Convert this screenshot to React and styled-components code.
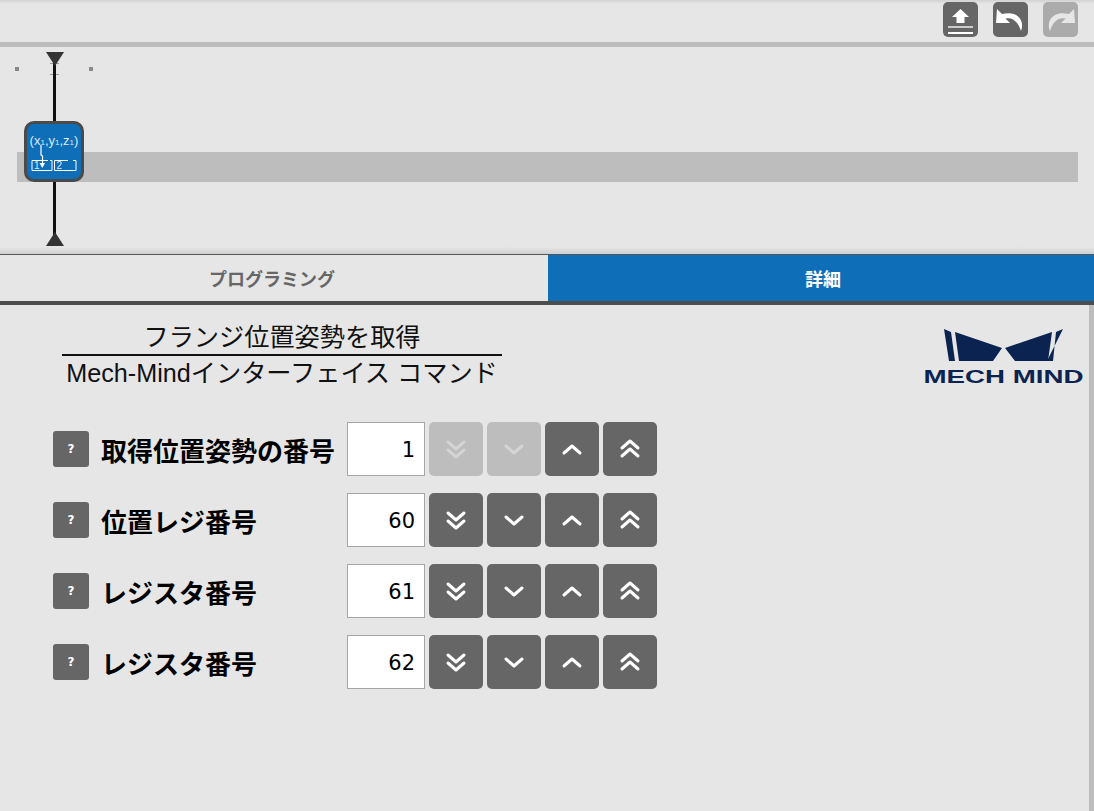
import React from 'react';
import styled, { createGlobalStyle } from 'styled-components';

const GlobalStyle = createGlobalStyle`
  html, body {
    margin: 0;
    padding: 0;
    background: #e6e6e6;
    overflow: hidden;
  }
  * {
    box-sizing: border-box;
  }
`;

const rows = [
  { label: '取得位置姿勢の番号', value: 1, atMin: true },
  { label: '位置レジ番号', value: 60 },
  { label: 'レジスタ番号', value: 61 },
  { label: 'レジスタ番号', value: 62 },
];

const Chevron = ({ up, double }) => (
  <svg width="26" height="26" viewBox="0 0 26 26" fill="none" stroke="#fff" strokeWidth="3" strokeLinecap="round" strokeLinejoin="round">
    {double ? (
      up ? (
        <>
          <polyline points="5,12 13,5 21,12" />
          <polyline points="5,20 13,13 21,20" />
        </>
      ) : (
        <>
          <polyline points="5,6 13,13 21,6" />
          <polyline points="5,14 13,21 21,14" />
        </>
      )
    ) : up ? (
      <polyline points="5,17 13,10 21,17" />
    ) : (
      <polyline points="5,10 13,17 21,10" />
    )}
  </svg>
);

const App = () => {
  return (
    <>
      <GlobalStyle />
      <Page>
        <Toolbar>
          <ToolButton>
            <svg width="35" height="35" viewBox="0 0 35 35">
              <path d="M17.5 7 L26 15 H21.5 V21 H13.5 V15 H9 Z" fill="#fff" />
              <rect x="5" y="24" width="25" height="2" fill="#ccc" />
              <rect x="5" y="30" width="25" height="2" fill="#fff" />
            </svg>
          </ToolButton>
          <ToolButton>
            <svg width="35" height="35" viewBox="0 0 35 35">
              <path d="M4 7 L3 21 H17 L12.5 16.5 C19 15 25 19 28 29 C32 19 25 8 9 12 Z" fill="#fff" />
            </svg>
          </ToolButton>
          <ToolButton $disabled>
            <svg width="35" height="35" viewBox="0 0 35 35">
              <path d="M31 7 L32 21 H18 L22.5 16.5 C16 15 10 19 7 29 C3 19 10 8 26 12 Z" fill="#e6e6e6" />
            </svg>
          </ToolButton>
        </Toolbar>

        <Timeline>
          <Track />
          <Dot $x={15} />
          <Dot $x={89} />
          <Tick $y={16} />
          <Tick $y={27} />
          <Axis />
          <Pointer $top={5} />
          <Pointer $bottom={8} $up />
          <Node>
            <svg width="54" height="55" viewBox="0 0 54 55">
              <text x="27" y="21" textAnchor="middle" fontFamily="Liberation Sans, sans-serif" fontSize="13" fill="#dce9f5">
                (x<tspan fontSize="8">1</tspan>,y<tspan fontSize="8">1</tspan>,z<tspan fontSize="8">1</tspan>)
              </text>
              <path d="M21 36.5 H5 V46.5 H25 V36.5 H23 M41 36.5 H27.5 V46.5 H49 V36.5 H46" fill="none" stroke="#fff" strokeWidth="1" />
              <text x="7" y="45" fontFamily="Liberation Sans, sans-serif" fontSize="10" fill="#dce9f5">1</text>
              <text x="29.5" y="45" fontFamily="Liberation Sans, sans-serif" fontSize="10" fill="#dce9f5">2</text>
              <path d="M14 21 V31 L15.5 32 V40" fill="none" stroke="#fff" strokeWidth="1.2" />
              <path d="M12.5 39 H18 L15.3 44 Z" fill="#fff" />
            </svg>
          </Node>
        </Timeline>

        <Tabs>
          <Tab>プログラミング</Tab>
          <Tab $active>詳細</Tab>
        </Tabs>

        <Detail>
          <Header>
            <TitleBlock>
              <Title>フランジ位置姿勢を取得</Title>
              <SubTitle>Mech-Mindインターフェイス コマンド</SubTitle>
            </TitleBlock>
            <Logo>
              <svg width="162" height="60" viewBox="0 0 162 60">
                <path d="M22 0 L29 3 L33 32 L27 32 Z M141 0 L134 3 L131 32 L125 32 Z" fill="#0b2350" />
                <path d="M33 3 L80 19 L71 32 L37 32 Z M130 3 L83 19 L93 32 L126 32 Z" fill="#0b2350" />
                <text x="1.5" y="54" fontFamily="Liberation Sans, sans-serif" fontWeight="700" fontSize="18" fill="#0b2350" textLength="160" lengthAdjust="spacingAndGlyphs">
                  MECH MIND
                </text>
              </svg>
            </Logo>
          </Header>

          <Form>
            {rows.map((row, i) => (
              <Row key={i}>
                <HelpButton>?</HelpButton>
                <Label>{row.label}</Label>
                <ValueBox>{row.value}</ValueBox>
                <StepButton $disabled={row.atMin}>
                  <Chevron double />
                </StepButton>
                <StepButton $disabled={row.atMin}>
                  <Chevron />
                </StepButton>
                <StepButton>
                  <Chevron up />
                </StepButton>
                <StepButton>
                  <Chevron up double />
                </StepButton>
              </Row>
            ))}
          </Form>
          <ScrollEdge />
        </Detail>
      </Page>
    </>
  );
};

export default App;

const Page = styled.div`
  width: 1094px;
  height: 811px;
  background: #e6e6e6;
  display: flex;
  flex-direction: column;
  font-family: 'Liberation Sans', 'Noto Sans CJK JP', sans-serif;
`;

const Toolbar = styled.div`
  height: 47px;
  padding: 2px 16px 0 0;
  display: flex;
  justify-content: flex-end;
  gap: 15px;
  background: linear-gradient(to bottom, #d2d2d2 0, #e6e6e6 4px);
  border-bottom: 5px solid #bdbdbd;
`;

const ToolButton = styled.div`
  width: 35px;
  height: 35px;
  border-radius: 5px;
  background: ${(p) => (p.$disabled ? '#ababab' : '#666666')};
`;

const Timeline = styled.div`
  position: relative;
  height: 208px;
  padding: 105px 16px 0 17px;
  background: linear-gradient(to bottom, #e6e6e6 0, #e6e6e6 200px, #cfcfcf 207px);
  border-bottom: 1px solid #555;
`;

const Track = styled.div`
  height: 30px;
  background: #bdbdbd;
`;

const Dot = styled.span`
  position: absolute;
  left: ${(p) => p.$x}px;
  top: 20px;
  width: 4px;
  height: 4px;
  background: #888;
`;

const Tick = styled.span`
  position: absolute;
  left: 50px;
  top: ${(p) => p.$y}px;
  width: 9px;
  height: 1px;
  background: #999;
`;

const Axis = styled.div`
  position: absolute;
  left: 53px;
  top: 10px;
  bottom: 12px;
  width: 3px;
  background: #111;
`;

const Pointer = styled.div`
  position: absolute;
  left: 46px;
  ${(p) => (p.$top !== undefined ? `top: ${p.$top}px;` : `bottom: ${p.$bottom}px;`)}
  width: 0;
  height: 0;
  border-left: 9px solid transparent;
  border-right: 9px solid transparent;
  ${(p) => (p.$up ? 'border-bottom: 14px solid #333;' : 'border-top: 14px solid #333;')}
`;

const Node = styled.div`
  position: absolute;
  left: 24px;
  top: 74px;
  width: 60px;
  height: 61px;
  border: 3px solid #4a4a4a;
  border-radius: 10px;
  background: #0e6eb8;
  overflow: hidden;
`;

const Tabs = styled.div`
  height: 50px;
  display: grid;
  grid-template-columns: 548px 1fr;
  border-bottom: 4px solid #4d4d4d;
`;

const Tab = styled.div`
  display: flex;
  align-items: center;
  justify-content: center;
  padding: ${(p) => (p.$active ? '0 0 0 4px' : '0 4px 0 0')};
  font-size: 18px;
  font-weight: 700;
  color: ${(p) => (p.$active ? '#fff' : '#666')};
  background: ${(p) => (p.$active ? '#0e6eb8' : '#e6e6e6')};
`;

const Detail = styled.div`
  position: relative;
  flex: 1;
  padding-top: 16px;
`;

const Header = styled.div`
  display: flex;
  justify-content: space-between;
  padding: 0 10px 0 62px;
`;

const TitleBlock = styled.div`
  width: 440px;
  text-align: center;
  color: #111;
  font-size: 25.2px;
`;

const Title = styled.div`
  height: 35px;
  line-height: 33px;
  border-bottom: 2px solid #111;
`;

const SubTitle = styled.div`
  height: 34px;
  line-height: 34px;
  white-space: nowrap;
`;

const Logo = styled.div`
  margin-top: 8px;
  height: 60px;
`;

const Form = styled.div`
  margin-top: 32px;
  padding-left: 53px;
  display: flex;
  flex-direction: column;
  gap: 17px;
`;

const Row = styled.div`
  display: flex;
  align-items: center;
  height: 54px;
  gap: 4px;
`;

const HelpButton = styled.div`
  width: 36px;
  height: 36px;
  border-radius: 3px;
  background: #666;
  color: #fff;
  font-size: 12px;
  font-weight: 700;
  font-family: 'DejaVu Sans', sans-serif;
  display: flex;
  align-items: center;
  justify-content: center;
`;

const Label = styled.div`
  width: 250px;
  padding-left: 8px;
  font-size: 26px;
  font-weight: 700;
  color: #000;
  white-space: nowrap;
`;

const ValueBox = styled.div`
  width: 78px;
  height: 54px;
  background: #fff;
  border: 1px solid #a6a6a6;
  padding: 2px 9px 0 0;
  display: flex;
  align-items: center;
  justify-content: flex-end;
  font-family: 'DejaVu Sans', sans-serif;
  font-size: 21px;
  color: #000;
`;

const StepButton = styled.div`
  width: 54px;
  height: 54px;
  border-radius: 5px;
  background: ${(p) => (p.$disabled ? '#bdbdbd' : '#666666')};
  display: flex;
  align-items: center;
  justify-content: center;
  svg {
    opacity: ${(p) => (p.$disabled ? 0.35 : 1)};
  }
`;

const ScrollEdge = styled.div`
  position: absolute;
  right: 0;
  top: 0;
  bottom: 0;
  width: 5px;
  background: #bdbdbd;
`;
